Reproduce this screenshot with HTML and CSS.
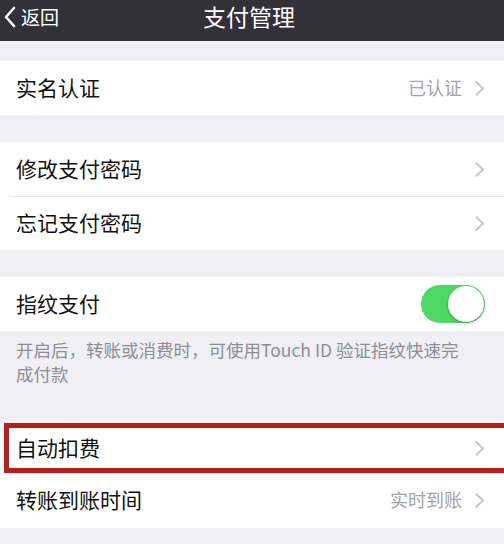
FILE: index.html
```html
<!DOCTYPE html>
<html>
    <head>
        <title>支付管理</title>
        <link rel="stylesheet" href="styles.css">
    </head>
    <body>
        <div class="navbar">
            <div class="back">
                <svg class="back_arrow" width="14" height="24" viewBox="0 0 14 24">
                    <path d="M11 3 L3 12 L11 21" fill="none" stroke="#fff" stroke-width="2.6" stroke-linecap="round" stroke-linejoin="round"/>
                </svg>
                <span>返回</span>
            </div>
            <div class="title">支付管理</div>
            <div></div>
        </div>

        <div class="group first">
            <div class="row">
                <span class="label">实名认证</span>
                <span class="value">已认证</span>
                <span class="chevron"></span>
            </div>
        </div>

        <div class="group">
            <div class="row">
                <span class="label">修改支付密码</span>
                <span class="chevron"></span>
            </div>
            <div class="row">
                <span class="label">忘记支付密码</span>
                <span class="chevron"></span>
            </div>
        </div>

        <div class="group">
            <div class="row">
                <span class="label">指纹支付</span>
                <span class="switch on"><span class="knob"></span></span>
            </div>
        </div>
        <p class="note">开启后，转账或消费时，可使用Touch ID 验证指纹快速完成付款</p>

        <div class="group last">
            <div class="row marked">
                <span class="label">自动扣费</span>
                <span class="chevron"></span>
            </div>
            <div class="row">
                <span class="label">转账到账时间</span>
                <span class="value">实时到账</span>
                <span class="chevron"></span>
            </div>
        </div>
    </body>
</html>
```

FILE: styles.css
```css
body {
    margin: 0;
    background-color: #efeff4;
    font-family: "Noto Sans CJK SC", "Noto Sans", sans-serif;
    color: #111;
    overflow: hidden;
}

/* top bar */
.navbar {
    height: 41px;
    background-color: #323137;
    color: #fff;
    display: grid;
    grid-template-columns: 1fr auto 1fr;
    align-items: center;
}
.back {
    display: flex;
    align-items: center;
    font-size: 19px;
    padding-left: 3px;
    gap: 4px;
    margin-top: -8px;
}
.title {
    font-size: 23px;
    margin-top: -10px;
    margin-left: -6px;
}

/* grouped list */
.group {
    background-color: #fff;
    margin-top: 27px;
}
.group.first {
    margin-top: 20px;
}
.row {
    height: 54px;
    display: flex;
    align-items: center;
    padding: 0 18px 0 16px;
    position: relative;
}
.row + .row::before {
    content: "";
    position: absolute;
    top: 0;
    left: 10px;
    right: 0;
    border-top: 1px solid #e3e3e6;
}
.label {
    font-size: 21px;
    flex: 1;
    margin-top: -3px;
}
.value {
    font-size: 18px;
    color: #a3a3a6;
    margin-right: 9px;
    margin-top: -3px;
}
.chevron {
    width: 9px;
    height: 9px;
    border-top: 2px solid #c7c7cc;
    border-right: 2px solid #c7c7cc;
    transform: rotate(45deg);
    margin-right: 4px;
}

/* toggle */
.switch {
    width: 64px;
    height: 38px;
    border-radius: 19px;
    background-color: #4cd964;
    position: relative;
    margin-right: 1px;
}
.knob {
    position: absolute;
    top: 1px;
    right: 1px;
    width: 36px;
    height: 36px;
    border-radius: 50%;
    background-color: #fff;
    box-shadow: 0 1px 3px rgba(0, 0, 0, 0.35);
}

.note {
    margin: 0;
    padding: 7px 30px 0 16px;
    height: 85px;
    font-size: 17.5px;
    line-height: 24px;
    color: #8e8e93;
}
.group.last {
    margin-top: 0;
}
.row.marked {
    height: 50px;
}
/* red frame drawn over the row */
.row.marked::after {
    content: "";
    position: absolute;
    top: 0;
    left: 4px;
    right: -10px;
    bottom: 0;
    border: 5px solid #b3201c;
}
.group.last .row:last-child {
    height: 55px;
}
```
